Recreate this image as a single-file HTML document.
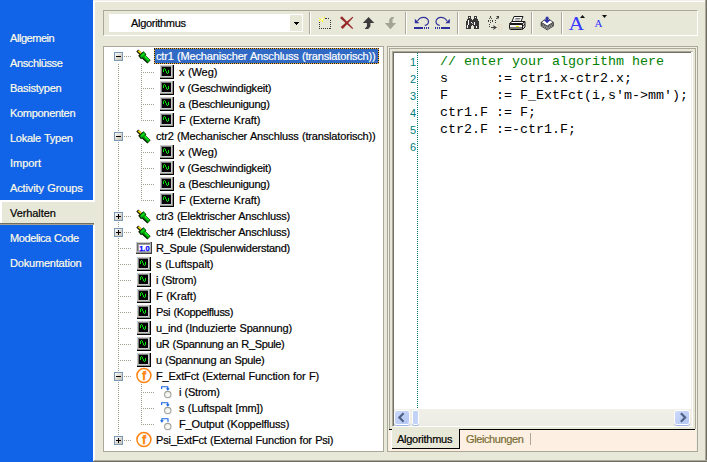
<!DOCTYPE html>
<html><head><meta charset="utf-8"><title>Verhalten</title>
<style>
html,body{margin:0;padding:0}
body{width:707px;height:462px;position:relative;overflow:hidden;background:#E8E8D8;font-family:"Liberation Sans",sans-serif;font-size:11px}
.a{position:absolute}
.t{position:absolute;white-space:nowrap;word-spacing:0.5px;-webkit-text-stroke:0.2px currentColor;line-height:13px;height:13px;font-size:11px}
.code{position:absolute;white-space:pre;font-family:"Liberation Mono",monospace;font-size:13.33px;line-height:17px;height:17px;left:440px;color:#000}
.ln{position:absolute;white-space:nowrap;font-size:11px;line-height:13px;color:#008080;width:20px;text-align:right;left:396px}
svg{position:absolute;left:0;top:0;overflow:visible}
</style></head><body>

<div class="a" style="left:0;top:0;width:93px;height:462px;background:#1163E7"></div>
<div class="a" style="left:93px;top:0;width:2px;height:462px;background:#fff"></div>
<div class="a" style="left:93px;top:0;width:614px;height:1px;background:#F4EFE8"></div><div class="a" style="left:93px;top:1px;width:612px;height:1px;background:#fff"></div>
<div class="a" style="left:705px;top:0;width:1px;height:462px;background:#ACA899"></div>
<div class="a" style="left:706px;top:0;width:1px;height:462px;background:#716F64"></div>
<div class="a" style="left:94px;top:460px;width:613px;height:1px;background:#ACA899"></div>
<div class="a" style="left:93px;top:461px;width:614px;height:1px;background:#716F64"></div>
<div class="a" style="left:0;top:200px;width:95px;height:25px;background:#E8E8D8"></div>
<div class="a" style="left:0;top:200px;width:95px;height:2px;background:#fff"></div><div class="a" style="left:0;top:200px;width:2px;height:23px;background:#fff"></div>
<div class="a" style="left:0;top:223px;width:94px;height:1px;background:#716F64"></div><div class="a" style="left:0;top:224px;width:94px;height:1px;background:#A8A494"></div>
<div class="a" style="left:103px;top:10px;width:595px;height:26px;box-sizing:border-box;border:1px solid #ACA899;border-right-color:#fff;border-bottom-color:#fff"></div>
<div class="a" style="left:109px;top:14px;width:194px;height:18px;background:#fff"></div>
<div class="a" style="left:290px;top:15px;width:12px;height:16px;background:#E8E8D8"></div>
<svg width="707" height="462" shape-rendering="crispEdges"><path d="M294 22h5v1h-1v1h-1v1h-1v-1h-1v-1h-1z" fill="#000"/></svg>
<div class="a" style="left:309px;top:12px;width:1px;height:22px;background:#ACA899"></div><div class="a" style="left:310px;top:12px;width:1px;height:22px;background:#fff"></div>
<div class="a" style="left:405px;top:12px;width:1px;height:22px;background:#ACA899"></div><div class="a" style="left:406px;top:12px;width:1px;height:22px;background:#fff"></div>
<div class="a" style="left:457px;top:12px;width:1px;height:22px;background:#ACA899"></div><div class="a" style="left:458px;top:12px;width:1px;height:22px;background:#fff"></div>
<div class="a" style="left:531px;top:12px;width:1px;height:22px;background:#ACA899"></div><div class="a" style="left:532px;top:12px;width:1px;height:22px;background:#fff"></div>
<div class="a" style="left:561px;top:12px;width:1px;height:22px;background:#ACA899"></div><div class="a" style="left:562px;top:12px;width:1px;height:22px;background:#fff"></div>
<div class="a" style="left:103px;top:46px;width:281px;height:406px;box-sizing:border-box;background:#fff;border:1px solid #ACA899;border-right-color:#ACA899;border-bottom-color:#ACA899"></div>
<div class="a" style="left:154px;top:48px;width:225px;height:16px;background:#316AC5"></div>
<div class="a" style="left:387px;top:46px;width:311px;height:406px;box-sizing:border-box;border:1px solid #ACA899"></div>
<div class="a" style="left:388px;top:47px;width:309px;height:404px;box-sizing:border-box;border:1px solid #EEEEE2"></div>
<div class="a" style="left:389px;top:48px;width:307px;height:402px;box-sizing:border-box;border:1px solid #ACA899;border-bottom:none"></div>
<div class="a" style="left:392px;top:51px;width:301px;height:376px;box-sizing:border-box;background:#fff;border-top:1px solid #ACA899;border-left:1px solid #ACA899;border-right:1px solid #fff;border-bottom:1px solid #fff"></div>
<div class="a" style="left:393px;top:52px;width:298px;height:374px;box-sizing:border-box;border-top:1px solid #716F64;border-left:1px solid #716F64"></div>
<div class="a" style="left:691px;top:53px;width:1px;height:373px;background:#F4ECE6"></div>
<div class="a" style="left:394px;top:409px;width:297px;height:17px;background:linear-gradient(#F0EFE8,#ECEBE4)"></div>
<div class="a" style="left:394px;top:410px;width:16px;height:15px;box-sizing:border-box;border:1px solid #fff;border-radius:3px;background:linear-gradient(135deg,#CCD9FA,#B4C6F2);box-shadow:0 1px 0 #9FB5E8"></div>
<div class="a" style="left:674px;top:410px;width:16px;height:15px;box-sizing:border-box;border:1px solid #fff;border-radius:3px;background:linear-gradient(135deg,#CCD9FA,#B4C6F2);box-shadow:0 1px 0 #9FB5E8"></div>
<div class="a" style="left:412px;top:410px;width:7px;height:15px;box-sizing:border-box;border:1px solid #fff;border-radius:2px;background:#C3D2F7;box-shadow:0 1px 0 #9FB5E8"></div>
<svg width="707" height="462"><path d="M403.6 413.3l-4.200 4.200 4.200 4.200" fill="none" stroke="#4D6185" stroke-width="2.2"/><path d="M680.900 413.300l4.200 4.200-4.200 4.200" fill="none" stroke="#4D6185" stroke-width="2.2"/></svg>
<div class="a" style="left:389px;top:429px;width:307px;height:22px;background:#FDF0E2"></div>
<div class="a" style="left:389px;top:429px;width:306px;height:1px;background:#000"></div>
<div class="a" style="left:392px;top:429px;width:68px;height:20px;box-sizing:border-box;background:#E8E8D8;border-right:1px solid #000;border-bottom:1px solid #000"></div>
<div class="a" style="left:530px;top:433px;width:1px;height:12px;background:#ACA899"></div>
<div class="a" style="left:391px;top:430px;width:1px;height:19px;background:#fff"></div>
<svg width="707" height="462" shape-rendering="crispEdges"><line x1="417.5" y1="53" x2="417.5" y2="409" stroke="#008080" stroke-width="1" stroke-dasharray="1 1"/></svg>
<div class="ln" style="top:56px">1</div>
<div class="ln" style="top:73px">2</div>
<div class="ln" style="top:90px">3</div>
<div class="ln" style="top:107px">4</div>
<div class="ln" style="top:124px">5</div>
<div class="ln" style="top:141px">6</div>
<div class="code" style="top:53px;color:#008000">// enter your algorithm here</div>
<div class="code" style="top:70px;color:#000">s      := ctr1.x-ctr2.x;</div>
<div class="code" style="top:87px;color:#000">F      := F_ExtFct(i,s'm-&gt;mm');</div>
<div class="code" style="top:104px;color:#000">ctr1.F := F;</div>
<div class="code" style="top:121px;color:#000">ctr2.F :=-ctr1.F;</div>
<svg width="707" height="462" shape-rendering="crispEdges">
<line x1="118.5" y1="64" x2="118.5" y2="441" stroke="#A0A08C" stroke-dasharray="1 1"/>
<defs><linearGradient id="bg" x1="0" y1="0" x2="1" y2="1"><stop offset="0" stop-color="#fff"/><stop offset="1" stop-color="#C3BAAA"/></linearGradient></defs>
<line x1="124" y1="56.5" x2="131" y2="56.5" stroke="#A0A08C" stroke-dasharray="1 1"/>
<line x1="143" y1="72.5" x2="154" y2="72.5" stroke="#A0A08C" stroke-dasharray="1 1"/>
<line x1="143" y1="88.5" x2="154" y2="88.5" stroke="#A0A08C" stroke-dasharray="1 1"/>
<line x1="143" y1="104.5" x2="154" y2="104.5" stroke="#A0A08C" stroke-dasharray="1 1"/>
<line x1="143" y1="120.5" x2="154" y2="120.5" stroke="#A0A08C" stroke-dasharray="1 1"/>
<line x1="124" y1="136.5" x2="131" y2="136.5" stroke="#A0A08C" stroke-dasharray="1 1"/>
<line x1="143" y1="152.5" x2="154" y2="152.5" stroke="#A0A08C" stroke-dasharray="1 1"/>
<line x1="143" y1="168.5" x2="154" y2="168.5" stroke="#A0A08C" stroke-dasharray="1 1"/>
<line x1="143" y1="184.5" x2="154" y2="184.5" stroke="#A0A08C" stroke-dasharray="1 1"/>
<line x1="143" y1="200.5" x2="154" y2="200.5" stroke="#A0A08C" stroke-dasharray="1 1"/>
<line x1="124" y1="216.5" x2="131" y2="216.5" stroke="#A0A08C" stroke-dasharray="1 1"/>
<line x1="124" y1="232.5" x2="131" y2="232.5" stroke="#A0A08C" stroke-dasharray="1 1"/>
<line x1="118" y1="248.5" x2="131" y2="248.5" stroke="#A0A08C" stroke-dasharray="1 1"/>
<line x1="118" y1="264.5" x2="131" y2="264.5" stroke="#A0A08C" stroke-dasharray="1 1"/>
<line x1="118" y1="280.5" x2="131" y2="280.5" stroke="#A0A08C" stroke-dasharray="1 1"/>
<line x1="118" y1="296.5" x2="131" y2="296.5" stroke="#A0A08C" stroke-dasharray="1 1"/>
<line x1="118" y1="312.5" x2="131" y2="312.5" stroke="#A0A08C" stroke-dasharray="1 1"/>
<line x1="118" y1="328.5" x2="131" y2="328.5" stroke="#A0A08C" stroke-dasharray="1 1"/>
<line x1="118" y1="344.5" x2="131" y2="344.5" stroke="#A0A08C" stroke-dasharray="1 1"/>
<line x1="118" y1="360.5" x2="131" y2="360.5" stroke="#A0A08C" stroke-dasharray="1 1"/>
<line x1="124" y1="376.5" x2="131" y2="376.5" stroke="#A0A08C" stroke-dasharray="1 1"/>
<line x1="143" y1="392.5" x2="154" y2="392.5" stroke="#A0A08C" stroke-dasharray="1 1"/>
<line x1="143" y1="408.5" x2="154" y2="408.5" stroke="#A0A08C" stroke-dasharray="1 1"/>
<line x1="143" y1="424.5" x2="154" y2="424.5" stroke="#A0A08C" stroke-dasharray="1 1"/>
<line x1="124" y1="440.5" x2="131" y2="440.5" stroke="#A0A08C" stroke-dasharray="1 1"/>
<line x1="141.5" y1="64" x2="141.5" y2="121" stroke="#A0A08C" stroke-dasharray="1 1"/>
<line x1="141.5" y1="144" x2="141.5" y2="201" stroke="#A0A08C" stroke-dasharray="1 1"/>
<line x1="141.5" y1="384" x2="141.5" y2="425" stroke="#A0A08C" stroke-dasharray="1 1"/>
<rect x="114" y="52" width="9" height="9" fill="#fff"/>
<rect x="114.5" y="52.5" width="8" height="8" rx="1" fill="url(#bg)" stroke="#7898B5"/>
<rect x="116" y="56" width="5" height="1" fill="#000"/>
<g shape-rendering="auto" transform="translate(0,0)"><path d="M137.3 50.4 L141.6 54.7" stroke="#101000" stroke-width="2.8"/><path d="M138.3 50.7 L142 54.4" stroke="#F4E400" stroke-width="1.5"/><path d="M139.6 57.5 L145 52.8" stroke="#001800" stroke-width="4.4"/><path d="M143 56.2 L149 61.9" stroke="#001800" stroke-width="4.7"/><path d="M140.6 57 L144.8 53.2" stroke="#00B810" stroke-width="2.9"/><path d="M143.3 55.8 L149.1 61.3" stroke="#009A00" stroke-width="3.2"/><path d="M141.6 55.6 L143.8 53.6" stroke="#10F020" stroke-width="1.2"/><path d="M144.8 56.4 L148.7 60.1" stroke="#18FF28" stroke-width="1.3"/></g>
<rect x="160" y="65" width="14" height="14" fill="#000"/>
<rect x="160" y="65" width="13" height="13" fill="#909090"/>
<rect x="160" y="65" width="12" height="12" fill="#C8C8C8"/>
<rect x="161" y="66" width="10" height="10" fill="#808080"/>
<rect x="162" y="67" width="9" height="9" fill="#000"/>
<rect x="164" y="68" width="1" height="1" fill="#00E800"/>
<rect x="163" y="69" width="1" height="1" fill="#00E800"/>
<rect x="165" y="69" width="1" height="1" fill="#00E800"/>
<rect x="163" y="70" width="1" height="1" fill="#00E800"/>
<rect x="165" y="70" width="1" height="1" fill="#00E800"/>
<rect x="168" y="70" width="1" height="1" fill="#00E800"/>
<rect x="163" y="71" width="1" height="1" fill="#00E800"/>
<rect x="166" y="71" width="1" height="1" fill="#00E800"/>
<rect x="168" y="71" width="1" height="1" fill="#00E800"/>
<rect x="166" y="72" width="1" height="1" fill="#00E800"/>
<rect x="168" y="72" width="1" height="1" fill="#00E800"/>
<rect x="167" y="73" width="1" height="1" fill="#00E800"/>
<rect x="160" y="81" width="14" height="14" fill="#000"/>
<rect x="160" y="81" width="13" height="13" fill="#909090"/>
<rect x="160" y="81" width="12" height="12" fill="#C8C8C8"/>
<rect x="161" y="82" width="10" height="10" fill="#808080"/>
<rect x="162" y="83" width="9" height="9" fill="#000"/>
<rect x="164" y="84" width="1" height="1" fill="#00E800"/>
<rect x="163" y="85" width="1" height="1" fill="#00E800"/>
<rect x="165" y="85" width="1" height="1" fill="#00E800"/>
<rect x="163" y="86" width="1" height="1" fill="#00E800"/>
<rect x="165" y="86" width="1" height="1" fill="#00E800"/>
<rect x="168" y="86" width="1" height="1" fill="#00E800"/>
<rect x="163" y="87" width="1" height="1" fill="#00E800"/>
<rect x="166" y="87" width="1" height="1" fill="#00E800"/>
<rect x="168" y="87" width="1" height="1" fill="#00E800"/>
<rect x="166" y="88" width="1" height="1" fill="#00E800"/>
<rect x="168" y="88" width="1" height="1" fill="#00E800"/>
<rect x="167" y="89" width="1" height="1" fill="#00E800"/>
<rect x="160" y="97" width="14" height="14" fill="#000"/>
<rect x="160" y="97" width="13" height="13" fill="#909090"/>
<rect x="160" y="97" width="12" height="12" fill="#C8C8C8"/>
<rect x="161" y="98" width="10" height="10" fill="#808080"/>
<rect x="162" y="99" width="9" height="9" fill="#000"/>
<rect x="164" y="100" width="1" height="1" fill="#00E800"/>
<rect x="163" y="101" width="1" height="1" fill="#00E800"/>
<rect x="165" y="101" width="1" height="1" fill="#00E800"/>
<rect x="163" y="102" width="1" height="1" fill="#00E800"/>
<rect x="165" y="102" width="1" height="1" fill="#00E800"/>
<rect x="168" y="102" width="1" height="1" fill="#00E800"/>
<rect x="163" y="103" width="1" height="1" fill="#00E800"/>
<rect x="166" y="103" width="1" height="1" fill="#00E800"/>
<rect x="168" y="103" width="1" height="1" fill="#00E800"/>
<rect x="166" y="104" width="1" height="1" fill="#00E800"/>
<rect x="168" y="104" width="1" height="1" fill="#00E800"/>
<rect x="167" y="105" width="1" height="1" fill="#00E800"/>
<rect x="160" y="113" width="14" height="14" fill="#000"/>
<rect x="160" y="113" width="13" height="13" fill="#909090"/>
<rect x="160" y="113" width="12" height="12" fill="#C8C8C8"/>
<rect x="161" y="114" width="10" height="10" fill="#808080"/>
<rect x="162" y="115" width="9" height="9" fill="#000"/>
<rect x="164" y="116" width="1" height="1" fill="#00E800"/>
<rect x="163" y="117" width="1" height="1" fill="#00E800"/>
<rect x="165" y="117" width="1" height="1" fill="#00E800"/>
<rect x="163" y="118" width="1" height="1" fill="#00E800"/>
<rect x="165" y="118" width="1" height="1" fill="#00E800"/>
<rect x="168" y="118" width="1" height="1" fill="#00E800"/>
<rect x="163" y="119" width="1" height="1" fill="#00E800"/>
<rect x="166" y="119" width="1" height="1" fill="#00E800"/>
<rect x="168" y="119" width="1" height="1" fill="#00E800"/>
<rect x="166" y="120" width="1" height="1" fill="#00E800"/>
<rect x="168" y="120" width="1" height="1" fill="#00E800"/>
<rect x="167" y="121" width="1" height="1" fill="#00E800"/>
<rect x="114" y="132" width="9" height="9" fill="#fff"/>
<rect x="114.5" y="132.5" width="8" height="8" rx="1" fill="url(#bg)" stroke="#7898B5"/>
<rect x="116" y="136" width="5" height="1" fill="#000"/>
<g shape-rendering="auto" transform="translate(0,80)"><path d="M137.3 50.4 L141.6 54.7" stroke="#101000" stroke-width="2.8"/><path d="M138.3 50.7 L142 54.4" stroke="#F4E400" stroke-width="1.5"/><path d="M139.6 57.5 L145 52.8" stroke="#001800" stroke-width="4.4"/><path d="M143 56.2 L149 61.9" stroke="#001800" stroke-width="4.7"/><path d="M140.6 57 L144.8 53.2" stroke="#00B810" stroke-width="2.9"/><path d="M143.3 55.8 L149.1 61.3" stroke="#009A00" stroke-width="3.2"/><path d="M141.6 55.6 L143.8 53.6" stroke="#10F020" stroke-width="1.2"/><path d="M144.8 56.4 L148.7 60.1" stroke="#18FF28" stroke-width="1.3"/></g>
<rect x="160" y="145" width="14" height="14" fill="#000"/>
<rect x="160" y="145" width="13" height="13" fill="#909090"/>
<rect x="160" y="145" width="12" height="12" fill="#C8C8C8"/>
<rect x="161" y="146" width="10" height="10" fill="#808080"/>
<rect x="162" y="147" width="9" height="9" fill="#000"/>
<rect x="164" y="148" width="1" height="1" fill="#00E800"/>
<rect x="163" y="149" width="1" height="1" fill="#00E800"/>
<rect x="165" y="149" width="1" height="1" fill="#00E800"/>
<rect x="163" y="150" width="1" height="1" fill="#00E800"/>
<rect x="165" y="150" width="1" height="1" fill="#00E800"/>
<rect x="168" y="150" width="1" height="1" fill="#00E800"/>
<rect x="163" y="151" width="1" height="1" fill="#00E800"/>
<rect x="166" y="151" width="1" height="1" fill="#00E800"/>
<rect x="168" y="151" width="1" height="1" fill="#00E800"/>
<rect x="166" y="152" width="1" height="1" fill="#00E800"/>
<rect x="168" y="152" width="1" height="1" fill="#00E800"/>
<rect x="167" y="153" width="1" height="1" fill="#00E800"/>
<rect x="160" y="161" width="14" height="14" fill="#000"/>
<rect x="160" y="161" width="13" height="13" fill="#909090"/>
<rect x="160" y="161" width="12" height="12" fill="#C8C8C8"/>
<rect x="161" y="162" width="10" height="10" fill="#808080"/>
<rect x="162" y="163" width="9" height="9" fill="#000"/>
<rect x="164" y="164" width="1" height="1" fill="#00E800"/>
<rect x="163" y="165" width="1" height="1" fill="#00E800"/>
<rect x="165" y="165" width="1" height="1" fill="#00E800"/>
<rect x="163" y="166" width="1" height="1" fill="#00E800"/>
<rect x="165" y="166" width="1" height="1" fill="#00E800"/>
<rect x="168" y="166" width="1" height="1" fill="#00E800"/>
<rect x="163" y="167" width="1" height="1" fill="#00E800"/>
<rect x="166" y="167" width="1" height="1" fill="#00E800"/>
<rect x="168" y="167" width="1" height="1" fill="#00E800"/>
<rect x="166" y="168" width="1" height="1" fill="#00E800"/>
<rect x="168" y="168" width="1" height="1" fill="#00E800"/>
<rect x="167" y="169" width="1" height="1" fill="#00E800"/>
<rect x="160" y="177" width="14" height="14" fill="#000"/>
<rect x="160" y="177" width="13" height="13" fill="#909090"/>
<rect x="160" y="177" width="12" height="12" fill="#C8C8C8"/>
<rect x="161" y="178" width="10" height="10" fill="#808080"/>
<rect x="162" y="179" width="9" height="9" fill="#000"/>
<rect x="164" y="180" width="1" height="1" fill="#00E800"/>
<rect x="163" y="181" width="1" height="1" fill="#00E800"/>
<rect x="165" y="181" width="1" height="1" fill="#00E800"/>
<rect x="163" y="182" width="1" height="1" fill="#00E800"/>
<rect x="165" y="182" width="1" height="1" fill="#00E800"/>
<rect x="168" y="182" width="1" height="1" fill="#00E800"/>
<rect x="163" y="183" width="1" height="1" fill="#00E800"/>
<rect x="166" y="183" width="1" height="1" fill="#00E800"/>
<rect x="168" y="183" width="1" height="1" fill="#00E800"/>
<rect x="166" y="184" width="1" height="1" fill="#00E800"/>
<rect x="168" y="184" width="1" height="1" fill="#00E800"/>
<rect x="167" y="185" width="1" height="1" fill="#00E800"/>
<rect x="160" y="193" width="14" height="14" fill="#000"/>
<rect x="160" y="193" width="13" height="13" fill="#909090"/>
<rect x="160" y="193" width="12" height="12" fill="#C8C8C8"/>
<rect x="161" y="194" width="10" height="10" fill="#808080"/>
<rect x="162" y="195" width="9" height="9" fill="#000"/>
<rect x="164" y="196" width="1" height="1" fill="#00E800"/>
<rect x="163" y="197" width="1" height="1" fill="#00E800"/>
<rect x="165" y="197" width="1" height="1" fill="#00E800"/>
<rect x="163" y="198" width="1" height="1" fill="#00E800"/>
<rect x="165" y="198" width="1" height="1" fill="#00E800"/>
<rect x="168" y="198" width="1" height="1" fill="#00E800"/>
<rect x="163" y="199" width="1" height="1" fill="#00E800"/>
<rect x="166" y="199" width="1" height="1" fill="#00E800"/>
<rect x="168" y="199" width="1" height="1" fill="#00E800"/>
<rect x="166" y="200" width="1" height="1" fill="#00E800"/>
<rect x="168" y="200" width="1" height="1" fill="#00E800"/>
<rect x="167" y="201" width="1" height="1" fill="#00E800"/>
<rect x="114" y="212" width="9" height="9" fill="#fff"/>
<rect x="114.5" y="212.5" width="8" height="8" rx="1" fill="url(#bg)" stroke="#7898B5"/>
<rect x="116" y="216" width="5" height="1" fill="#000"/>
<rect x="118" y="214" width="1" height="5" fill="#000"/>
<g shape-rendering="auto" transform="translate(0,160)"><path d="M137.3 50.4 L141.6 54.7" stroke="#101000" stroke-width="2.8"/><path d="M138.3 50.7 L142 54.4" stroke="#F4E400" stroke-width="1.5"/><path d="M139.6 57.5 L145 52.8" stroke="#001800" stroke-width="4.4"/><path d="M143 56.2 L149 61.9" stroke="#001800" stroke-width="4.7"/><path d="M140.6 57 L144.8 53.2" stroke="#00B810" stroke-width="2.9"/><path d="M143.3 55.8 L149.1 61.3" stroke="#009A00" stroke-width="3.2"/><path d="M141.6 55.6 L143.8 53.6" stroke="#10F020" stroke-width="1.2"/><path d="M144.8 56.4 L148.7 60.1" stroke="#18FF28" stroke-width="1.3"/></g>
<rect x="114" y="228" width="9" height="9" fill="#fff"/>
<rect x="114.5" y="228.5" width="8" height="8" rx="1" fill="url(#bg)" stroke="#7898B5"/>
<rect x="116" y="232" width="5" height="1" fill="#000"/>
<rect x="118" y="230" width="1" height="5" fill="#000"/>
<g shape-rendering="auto" transform="translate(0,176)"><path d="M137.3 50.4 L141.6 54.7" stroke="#101000" stroke-width="2.8"/><path d="M138.3 50.7 L142 54.4" stroke="#F4E400" stroke-width="1.5"/><path d="M139.6 57.5 L145 52.8" stroke="#001800" stroke-width="4.4"/><path d="M143 56.2 L149 61.9" stroke="#001800" stroke-width="4.7"/><path d="M140.6 57 L144.8 53.2" stroke="#00B810" stroke-width="2.9"/><path d="M143.3 55.8 L149.1 61.3" stroke="#009A00" stroke-width="3.2"/><path d="M141.6 55.6 L143.8 53.6" stroke="#10F020" stroke-width="1.2"/><path d="M144.8 56.4 L148.7 60.1" stroke="#18FF28" stroke-width="1.3"/></g>
<rect x="136" y="242" width="16" height="12" fill="#404040"/>
<rect x="136" y="242" width="15" height="11" fill="#909090"/>
<rect x="136" y="242" width="14" height="10" fill="#C8C8C8"/>
<rect x="137" y="243" width="13" height="9" fill="#707070"/>
<rect x="138" y="244" width="12" height="7" fill="#A0A0A0"/><rect x="139" y="245" width="11" height="6" fill="#fff"/>
<rect x="150" y="243" width="1" height="9" fill="#B0B0B0"/><rect x="137" y="251" width="13" height="1" fill="#B0B0B0"/>
<text shape-rendering="auto" x="144.4" y="250.6" text-anchor="middle" font-family="Liberation Sans,sans-serif" font-weight="bold" font-size="7.5" fill="#0000FF" stroke="#0000FF" stroke-width="0.25">1.0</text>
<rect x="137" y="257" width="14" height="14" fill="#000"/>
<rect x="137" y="257" width="13" height="13" fill="#909090"/>
<rect x="137" y="257" width="12" height="12" fill="#C8C8C8"/>
<rect x="138" y="258" width="10" height="10" fill="#808080"/>
<rect x="139" y="259" width="9" height="9" fill="#000"/>
<rect x="141" y="260" width="1" height="1" fill="#00E800"/>
<rect x="140" y="261" width="1" height="1" fill="#00E800"/>
<rect x="142" y="261" width="1" height="1" fill="#00E800"/>
<rect x="140" y="262" width="1" height="1" fill="#00E800"/>
<rect x="142" y="262" width="1" height="1" fill="#00E800"/>
<rect x="145" y="262" width="1" height="1" fill="#00E800"/>
<rect x="140" y="263" width="1" height="1" fill="#00E800"/>
<rect x="143" y="263" width="1" height="1" fill="#00E800"/>
<rect x="145" y="263" width="1" height="1" fill="#00E800"/>
<rect x="143" y="264" width="1" height="1" fill="#00E800"/>
<rect x="145" y="264" width="1" height="1" fill="#00E800"/>
<rect x="144" y="265" width="1" height="1" fill="#00E800"/>
<rect x="137" y="273" width="14" height="14" fill="#000"/>
<rect x="137" y="273" width="13" height="13" fill="#909090"/>
<rect x="137" y="273" width="12" height="12" fill="#C8C8C8"/>
<rect x="138" y="274" width="10" height="10" fill="#808080"/>
<rect x="139" y="275" width="9" height="9" fill="#000"/>
<rect x="141" y="276" width="1" height="1" fill="#00E800"/>
<rect x="140" y="277" width="1" height="1" fill="#00E800"/>
<rect x="142" y="277" width="1" height="1" fill="#00E800"/>
<rect x="140" y="278" width="1" height="1" fill="#00E800"/>
<rect x="142" y="278" width="1" height="1" fill="#00E800"/>
<rect x="145" y="278" width="1" height="1" fill="#00E800"/>
<rect x="140" y="279" width="1" height="1" fill="#00E800"/>
<rect x="143" y="279" width="1" height="1" fill="#00E800"/>
<rect x="145" y="279" width="1" height="1" fill="#00E800"/>
<rect x="143" y="280" width="1" height="1" fill="#00E800"/>
<rect x="145" y="280" width="1" height="1" fill="#00E800"/>
<rect x="144" y="281" width="1" height="1" fill="#00E800"/>
<rect x="137" y="289" width="14" height="14" fill="#000"/>
<rect x="137" y="289" width="13" height="13" fill="#909090"/>
<rect x="137" y="289" width="12" height="12" fill="#C8C8C8"/>
<rect x="138" y="290" width="10" height="10" fill="#808080"/>
<rect x="139" y="291" width="9" height="9" fill="#000"/>
<rect x="141" y="292" width="1" height="1" fill="#00E800"/>
<rect x="140" y="293" width="1" height="1" fill="#00E800"/>
<rect x="142" y="293" width="1" height="1" fill="#00E800"/>
<rect x="140" y="294" width="1" height="1" fill="#00E800"/>
<rect x="142" y="294" width="1" height="1" fill="#00E800"/>
<rect x="145" y="294" width="1" height="1" fill="#00E800"/>
<rect x="140" y="295" width="1" height="1" fill="#00E800"/>
<rect x="143" y="295" width="1" height="1" fill="#00E800"/>
<rect x="145" y="295" width="1" height="1" fill="#00E800"/>
<rect x="143" y="296" width="1" height="1" fill="#00E800"/>
<rect x="145" y="296" width="1" height="1" fill="#00E800"/>
<rect x="144" y="297" width="1" height="1" fill="#00E800"/>
<rect x="137" y="305" width="14" height="14" fill="#000"/>
<rect x="137" y="305" width="13" height="13" fill="#909090"/>
<rect x="137" y="305" width="12" height="12" fill="#C8C8C8"/>
<rect x="138" y="306" width="10" height="10" fill="#808080"/>
<rect x="139" y="307" width="9" height="9" fill="#000"/>
<rect x="141" y="308" width="1" height="1" fill="#00E800"/>
<rect x="140" y="309" width="1" height="1" fill="#00E800"/>
<rect x="142" y="309" width="1" height="1" fill="#00E800"/>
<rect x="140" y="310" width="1" height="1" fill="#00E800"/>
<rect x="142" y="310" width="1" height="1" fill="#00E800"/>
<rect x="145" y="310" width="1" height="1" fill="#00E800"/>
<rect x="140" y="311" width="1" height="1" fill="#00E800"/>
<rect x="143" y="311" width="1" height="1" fill="#00E800"/>
<rect x="145" y="311" width="1" height="1" fill="#00E800"/>
<rect x="143" y="312" width="1" height="1" fill="#00E800"/>
<rect x="145" y="312" width="1" height="1" fill="#00E800"/>
<rect x="144" y="313" width="1" height="1" fill="#00E800"/>
<rect x="137" y="321" width="14" height="14" fill="#000"/>
<rect x="137" y="321" width="13" height="13" fill="#909090"/>
<rect x="137" y="321" width="12" height="12" fill="#C8C8C8"/>
<rect x="138" y="322" width="10" height="10" fill="#808080"/>
<rect x="139" y="323" width="9" height="9" fill="#000"/>
<rect x="141" y="324" width="1" height="1" fill="#00E800"/>
<rect x="140" y="325" width="1" height="1" fill="#00E800"/>
<rect x="142" y="325" width="1" height="1" fill="#00E800"/>
<rect x="140" y="326" width="1" height="1" fill="#00E800"/>
<rect x="142" y="326" width="1" height="1" fill="#00E800"/>
<rect x="145" y="326" width="1" height="1" fill="#00E800"/>
<rect x="140" y="327" width="1" height="1" fill="#00E800"/>
<rect x="143" y="327" width="1" height="1" fill="#00E800"/>
<rect x="145" y="327" width="1" height="1" fill="#00E800"/>
<rect x="143" y="328" width="1" height="1" fill="#00E800"/>
<rect x="145" y="328" width="1" height="1" fill="#00E800"/>
<rect x="144" y="329" width="1" height="1" fill="#00E800"/>
<rect x="137" y="337" width="14" height="14" fill="#000"/>
<rect x="137" y="337" width="13" height="13" fill="#909090"/>
<rect x="137" y="337" width="12" height="12" fill="#C8C8C8"/>
<rect x="138" y="338" width="10" height="10" fill="#808080"/>
<rect x="139" y="339" width="9" height="9" fill="#000"/>
<rect x="141" y="340" width="1" height="1" fill="#00E800"/>
<rect x="140" y="341" width="1" height="1" fill="#00E800"/>
<rect x="142" y="341" width="1" height="1" fill="#00E800"/>
<rect x="140" y="342" width="1" height="1" fill="#00E800"/>
<rect x="142" y="342" width="1" height="1" fill="#00E800"/>
<rect x="145" y="342" width="1" height="1" fill="#00E800"/>
<rect x="140" y="343" width="1" height="1" fill="#00E800"/>
<rect x="143" y="343" width="1" height="1" fill="#00E800"/>
<rect x="145" y="343" width="1" height="1" fill="#00E800"/>
<rect x="143" y="344" width="1" height="1" fill="#00E800"/>
<rect x="145" y="344" width="1" height="1" fill="#00E800"/>
<rect x="144" y="345" width="1" height="1" fill="#00E800"/>
<rect x="137" y="353" width="14" height="14" fill="#000"/>
<rect x="137" y="353" width="13" height="13" fill="#909090"/>
<rect x="137" y="353" width="12" height="12" fill="#C8C8C8"/>
<rect x="138" y="354" width="10" height="10" fill="#808080"/>
<rect x="139" y="355" width="9" height="9" fill="#000"/>
<rect x="141" y="356" width="1" height="1" fill="#00E800"/>
<rect x="140" y="357" width="1" height="1" fill="#00E800"/>
<rect x="142" y="357" width="1" height="1" fill="#00E800"/>
<rect x="140" y="358" width="1" height="1" fill="#00E800"/>
<rect x="142" y="358" width="1" height="1" fill="#00E800"/>
<rect x="145" y="358" width="1" height="1" fill="#00E800"/>
<rect x="140" y="359" width="1" height="1" fill="#00E800"/>
<rect x="143" y="359" width="1" height="1" fill="#00E800"/>
<rect x="145" y="359" width="1" height="1" fill="#00E800"/>
<rect x="143" y="360" width="1" height="1" fill="#00E800"/>
<rect x="145" y="360" width="1" height="1" fill="#00E800"/>
<rect x="144" y="361" width="1" height="1" fill="#00E800"/>
<rect x="114" y="372" width="9" height="9" fill="#fff"/>
<rect x="114.5" y="372.5" width="8" height="8" rx="1" fill="url(#bg)" stroke="#7898B5"/>
<rect x="116" y="376" width="5" height="1" fill="#000"/>
<circle shape-rendering="auto" cx="143.9" cy="375.6" r="7" fill="#fff" stroke="#FF8410" stroke-width="1.5"/>
<text shape-rendering="auto" x="144" y="380" text-anchor="middle" font-family="Liberation Sans,sans-serif" font-weight="bold" font-size="12.5" fill="#FF8410" stroke="#FF8410" stroke-width="0.3">f</text>
<g transform="translate(0.6,0.2)">
<circle shape-rendering="auto" cx="167.2" cy="394.4" r="3.2" fill="#F6F6F2" stroke="#A0A098" stroke-width="1.05"/>
<path shape-rendering="auto" d="M161 388.8V386.6H167.2V389" fill="none" stroke="#1464E4" stroke-width="1.1"/><path shape-rendering="auto" d="M165.3 388.1H169.1L167.2 390.5Z" fill="#1464E4"/>
</g>
<g transform="translate(0.6,0.2)">
<circle shape-rendering="auto" cx="167.2" cy="410.4" r="3.2" fill="#F6F6F2" stroke="#A0A098" stroke-width="1.05"/>
<path shape-rendering="auto" d="M161 404.8V402.6H167.2V405" fill="none" stroke="#1464E4" stroke-width="1.1"/><path shape-rendering="auto" d="M165.3 404.1H169.1L167.2 406.5Z" fill="#1464E4"/>
</g>
<g transform="translate(0.6,0.2)">
<circle shape-rendering="auto" cx="167.2" cy="426.4" r="3.2" fill="#F6F6F2" stroke="#A0A098" stroke-width="1.05"/>
<path shape-rendering="auto" d="M167.4 421.8V418.6H161.3V421" fill="none" stroke="#1464E4" stroke-width="1.1"/><path shape-rendering="auto" d="M159.4 420.1H163.2L161.3 422.5Z" fill="#1464E4"/>
</g>
<rect x="114" y="436" width="9" height="9" fill="#fff"/>
<rect x="114.5" y="436.5" width="8" height="8" rx="1" fill="url(#bg)" stroke="#7898B5"/>
<rect x="116" y="440" width="5" height="1" fill="#000"/>
<rect x="118" y="438" width="1" height="5" fill="#000"/>
<circle shape-rendering="auto" cx="143.9" cy="439.6" r="7" fill="#fff" stroke="#FF8410" stroke-width="1.5"/>
<text shape-rendering="auto" x="144" y="444" text-anchor="middle" font-family="Liberation Sans,sans-serif" font-weight="bold" font-size="12.5" fill="#FF8410" stroke="#FF8410" stroke-width="0.3">f</text>
</svg>
<svg width="707" height="462" shape-rendering="crispEdges"><rect x="154.5" y="48.5" width="224" height="15" fill="none" stroke="#202020"/><rect x="154.5" y="48.5" width="224" height="15" fill="none" stroke="#F0B040" stroke-dasharray="1 1"/></svg>
<svg width="707" height="462">
<!-- new (dotted rect + sparkle) -->
<g shape-rendering="crispEdges">
<rect x="319.5" y="18.5" width="11" height="10" fill="none" stroke="#383838" stroke-dasharray="1 1"/>
<rect x="319" y="17" width="6" height="5" fill="#E8E8D8"/>
<rect x="330" y="18" width="1" height="1" fill="#E8E8D8"/>
<rect x="322" y="16" width="1" height="1" fill="#F8F0A0"/>
<rect x="324" y="17" width="1" height="1" fill="#FFFF00"/>
<rect x="319" y="18" width="1" height="1" fill="#FFFF40"/><rect x="321" y="18" width="2" height="1" fill="#FFFFA0"/>
<rect x="320" y="19" width="1" height="1" fill="#FFFF00"/><rect x="321" y="19" width="2" height="1" fill="#FFFFFF"/><rect x="323" y="19" width="1" height="1" fill="#FFFF00"/>
<rect x="319" y="20" width="1" height="1" fill="#FFFF00"/><rect x="321" y="20" width="2" height="1" fill="#FFFF60"/>
<rect x="322" y="21" width="1" height="1" fill="#FFFF00"/><rect x="320" y="21" width="1" height="1" fill="#F0E890"/>
<rect x="325" y="18" width="1" height="1" fill="#383838"/><rect x="319" y="22" width="1" height="1" fill="#383838"/>
</g>
<!-- delete X -->
<path d="M340 17.9 L341.9 16.3 L353.2 28.2 L352.3 29.1 Z" fill="#982828"/>
<path d="M340.7 27.1 L342.7 29.1 L353.3 17.5 L352.5 16.7 Z" fill="#982828"/>
<!-- up arrow -->
<path d="M368.6 16.9 L374.3 23 H370.4 V26.4 L368.2 28.9 H364.6 L366.9 26.2 V23 H362.8 Z" fill="#3C3C3C"/>
<!-- down arrow (disabled) -->
<path d="M390.4 29.2 L384.8 23 H389.2 V19.6 L391.4 17 H394.4 L392.5 19.8 V23 H396.1 Z" fill="#A4A494"/>
<!-- undo -->
<g fill="none" stroke="#30309C">
<path d="M417.5 21 C419 18.5,421.5 17.400,423.500 17.400 C426.500 17.400,428.500 19.500,428.500 21.500 C428.500 23.500,427 25,424.800 25.400" stroke-width="1.15"/>
<path d="M414.800 18.800 V23.200 H419.300 Z" fill="#30309C" stroke="none"/>
<path d="M414 28 H423" stroke-width="2" shape-rendering="crispEdges"/>
<path d="M424 28 H430" stroke-width="2" stroke-dasharray="1 1" shape-rendering="crispEdges"/>
</g>
<!-- redo -->
<g fill="none" stroke="#30309C">
<path d="M447 21 C445.500 18.500,443 17.400,441 17.400 C438 17.400,436 19.500,436 21.500 C436 23.500,437.500 25,439.700 25.400" stroke-width="1.15"/>
<path d="M449.800 18.800 V23.200 H445.300 Z" fill="#30309C" stroke="none"/>
<path d="M441 28 H450" stroke-width="2" shape-rendering="crispEdges"/>
<path d="M435 28 H441" stroke-width="2" stroke-dasharray="1 1" shape-rendering="crispEdges"/>
</g>
<!-- binoculars -->
<g shape-rendering="crispEdges">
<rect x="468" y="16" width="3" height="3" fill="#383838"/>
<rect x="474" y="16" width="3" height="3" fill="#383838"/>
<rect x="469" y="17" width="1" height="1" fill="#fff"/>
<rect x="475" y="17" width="1" height="1" fill="#fff"/>
<rect x="467" y="19" width="5" height="2" fill="#383838"/>
<rect x="473" y="19" width="5" height="2" fill="#383838"/>
<rect x="466" y="21" width="13" height="4" fill="#383838"/>
<rect x="466" y="25" width="5" height="4" fill="#383838"/>
<rect x="474" y="25" width="5" height="4" fill="#383838"/>
<rect x="471" y="25" width="1" height="1" fill="#383838"/>
<rect x="473" y="25" width="1" height="1" fill="#383838"/>
<rect x="472" y="20" width="1" height="1" fill="#383838"/>
<rect x="468" y="20" width="1" height="5" fill="#fff"/>
<rect x="467" y="25" width="1" height="3" fill="#fff"/>
<rect x="474" y="22" width="1" height="3" fill="#fff"/>
<rect x="476" y="26" width="1" height="2" fill="#fff"/>
<rect x="471" y="22" width="1" height="1" fill="#fff"/>
<rect x="472" y="23" width="1" height="1" fill="#C0C0C0"/>
<rect x="490" y="16" width="1" height="1" fill="#404040"/>
<rect x="490" y="17" width="1" height="1" fill="#404040"/>
<rect x="489" y="18" width="1" height="1" fill="#404040"/>
<rect x="491" y="18" width="1" height="1" fill="#404040"/>
<rect x="488" y="20" width="1" height="1" fill="#404040"/>
<rect x="490" y="20" width="1" height="1" fill="#404040"/>
<rect x="492" y="20" width="1" height="1" fill="#404040"/>
<rect x="488" y="21" width="1" height="1" fill="#404040"/>
<rect x="492" y="21" width="1" height="1" fill="#404040"/>
<rect x="490" y="22" width="1" height="1" fill="#404040"/>
<rect x="489" y="24" width="1" height="1" fill="#404040"/>
<rect x="489" y="26" width="1" height="1" fill="#404040"/>
<rect x="491" y="27" width="1" height="1" fill="#404040"/>
<rect x="489" y="18" width="1" height="1" fill="#806040"/>
<rect x="495" y="22" width="1" height="1" fill="#404040"/>
<rect x="495" y="20" width="1" height="1" fill="#404040"/>
<rect x="496" y="18" width="1" height="1" fill="#404040"/>
<path d="M496 16 H499 V19 L498 18 L497 19 L496.500 18.500 L497.500 17.500 Z" fill="#404040" shape-rendering="auto"/>
<path d="M493 25 L497 27.500 L493 30 L494 27.500 Z" fill="#404040" shape-rendering="auto"/>
<rect x="492" y="27" width="2" height="1" fill="#404040"/>
</g>
<text x="497.3" y="29.6" font-family="Liberation Sans,sans-serif" font-size="8.5" fill="#E8DAC4">B</text>
<!-- printer -->
<g stroke="#181818" stroke-width="1" stroke-linejoin="round">
<path d="M509.500 23.500 L512 21.500 H525 L522.500 23.500 Z" fill="#fff"/>
<path d="M522.500 23.500 L525 21.500 V27 L522.500 29.500 Z" fill="#D8D8D0"/>
<path d="M514 16.500 H523 L521 21.500 H512 Z" fill="#fff"/>
<rect x="509.500" y="23.500" width="13" height="6" rx="1" fill="#F4F4EC"/>
<path d="M510 24.200 H522.500" stroke-width="1.600" fill="none"/>
<path d="M510 28 H522.500" stroke-width="1.100" fill="none"/>
<path d="M523 26 L525 24.200" stroke-width="0.800" fill="none"/>
<path d="M515.500 18.500 H520.500 M514.700 20 H519.700" stroke="#686868" stroke-width="0.900" fill="none"/>
</g>
<rect x="516" y="26" width="3" height="1" fill="#F0E000" shape-rendering="crispEdges"/>
<!-- stack with arrow -->
<g fill="none" stroke="#383838" stroke-width="0.900" stroke-linejoin="round">
<path d="M541.300 22.300 V26.200 M553.200 22.300 V26.200"/>
<path d="M541.300 26.200 L547.200 29.900 L553.200 26.200 V22.300 L547.200 26 L541.300 22.300 Z" fill="#F4F4F4"/>
<path d="M541.300 23.600 L547.200 27.300 L553.200 23.600 M541.300 24.900 L547.200 28.600 L553.200 24.900"/>
<path d="M541.300 22.300 L547.200 17.800 L553.200 22.300 L547.200 26 Z" fill="#fff"/>
</g>
<path d="M545.800 16.800 H548.400 V20 H550.500 L547.100 23.300 L543.700 20 H545.800 Z" fill="#3030A8"/>
<!-- font bigger / smaller -->
<text transform="translate(568.6,29.8) scale(1.12,1)" x="0" y="0" font-family="Liberation Serif,serif" font-size="19.3" fill="#3838FF">A</text>
<path d="M580 18 l2.500 -3 l2.500 3 z" fill="#101010"/>
<text x="594.5" y="27" font-family="Liberation Serif,serif" font-size="11" fill="#3030FF">A</text>
<path d="M602 15 h5 l-2.500 3 z" fill="#101010"/>
</svg>

<div class="t" style="left:10px;top:32px;color:#FFFCE8;letter-spacing:-0.446px">Allgemein</div>
<div class="t" style="left:10px;top:57px;color:#FFFCE8;letter-spacing:-0.377px">Anschlüsse</div>
<div class="t" style="left:10px;top:82px;color:#FFFCE8;letter-spacing:-0.241px">Basistypen</div>
<div class="t" style="left:10px;top:107px;color:#FFFCE8;letter-spacing:-0.3px">Komponenten</div>
<div class="t" style="left:10px;top:132px;color:#FFFCE8;letter-spacing:-0.254px">Lokale Typen</div>
<div class="t" style="left:10px;top:157px;color:#FFFCE8;letter-spacing:-0.031px">Import</div>
<div class="t" style="left:10px;top:182px;color:#FFFCE8;letter-spacing:-0.125px">Activity Groups</div>
<div class="t" style="left:10px;top:207px;color:#000;letter-spacing:-0.087px">Verhalten</div>
<div class="t" style="left:10px;top:232px;color:#FFFCE8;letter-spacing:-0.406px">Modelica Code</div>
<div class="t" style="left:10px;top:257px;color:#FFFCE8;letter-spacing:-0.192px">Dokumentation</div>
<div class="t" style="left:131px;top:17px;color:#000;letter-spacing:-0.307px">Algorithmus</div>
<div class="t" style="left:156px;top:50px;color:#fff;letter-spacing:-0.163px">ctr1 (Mechanischer Anschluss (translatorisch))</div>
<div class="t" style="left:179px;top:66px;color:#000;letter-spacing:-0.073px">x (Weg)</div>
<div class="t" style="left:179px;top:82px;color:#000;letter-spacing:-0.22px">v (Geschwindigkeit)</div>
<div class="t" style="left:179px;top:98px;color:#000;letter-spacing:-0.261px">a (Beschleunigung)</div>
<div class="t" style="left:179px;top:114px;color:#000;letter-spacing:-0.053px">F (Externe Kraft)</div>
<div class="t" style="left:156px;top:130px;color:#000;letter-spacing:-0.163px">ctr2 (Mechanischer Anschluss (translatorisch))</div>
<div class="t" style="left:179px;top:146px;color:#000;letter-spacing:-0.073px">x (Weg)</div>
<div class="t" style="left:179px;top:162px;color:#000;letter-spacing:-0.22px">v (Geschwindigkeit)</div>
<div class="t" style="left:179px;top:178px;color:#000;letter-spacing:-0.261px">a (Beschleunigung)</div>
<div class="t" style="left:179px;top:194px;color:#000;letter-spacing:-0.053px">F (Externe Kraft)</div>
<div class="t" style="left:156px;top:210px;color:#000;letter-spacing:-0.199px">ctr3 (Elektrischer Anschluss)</div>
<div class="t" style="left:156px;top:226px;color:#000;letter-spacing:-0.199px">ctr4 (Elektrischer Anschluss)</div>
<div class="t" style="left:156px;top:242px;color:#000;letter-spacing:-0.251px">R_Spule (Spulenwiderstand)</div>
<div class="t" style="left:156px;top:258px;color:#000;letter-spacing:-0.036px">s (Luftspalt)</div>
<div class="t" style="left:156px;top:274px;color:#000;letter-spacing:-0.241px">i (Strom)</div>
<div class="t" style="left:156px;top:290px;color:#000;letter-spacing:-0.038px">F (Kraft)</div>
<div class="t" style="left:156px;top:306px;color:#000;letter-spacing:-0.356px">Psi (Koppelfluss)</div>
<div class="t" style="left:156px;top:322px;color:#000;letter-spacing:-0.142px">u_ind (Induzierte Spannung)</div>
<div class="t" style="left:156px;top:338px;color:#000;letter-spacing:-0.344px">uR (Spannung an R_Spule)</div>
<div class="t" style="left:156px;top:354px;color:#000;letter-spacing:-0.298px">u (Spannung an Spule)</div>
<div class="t" style="left:156px;top:370px;color:#000;letter-spacing:-0.137px">F_ExtFct (External Function for F)</div>
<div class="t" style="left:179px;top:386px;color:#000;letter-spacing:-0.23px">i (Strom)</div>
<div class="t" style="left:179px;top:402px;color:#000;letter-spacing:-0.109px">s (Luftspalt [mm])</div>
<div class="t" style="left:179px;top:418px;color:#000;letter-spacing:-0.156px">F_Output (Koppelfluss)</div>
<div class="t" style="left:156px;top:434px;color:#000;letter-spacing:-0.197px">Psi_ExtFct (External Function for Psi)</div>
<div class="t" style="left:397px;top:433px;color:#000;letter-spacing:-0.262px">Algorithmus</div>
<div class="t" style="left:466px;top:433px;color:#786C34;letter-spacing:-0.389px">Gleichungen</div>
</body></html>
